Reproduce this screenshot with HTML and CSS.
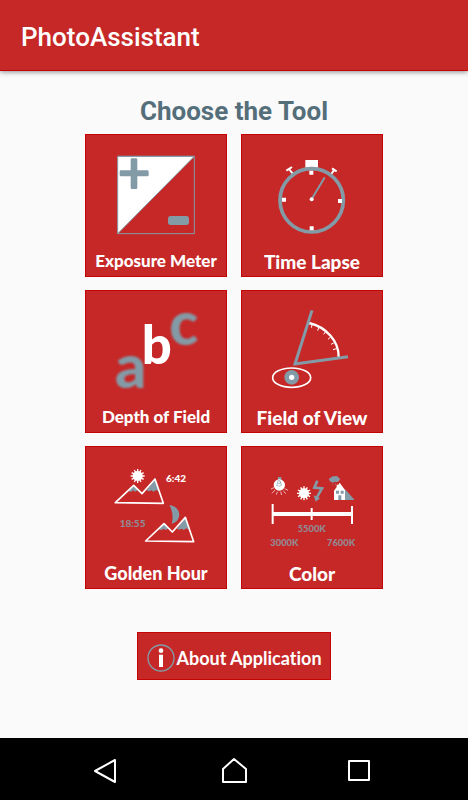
FILE: index.html
```html
<!DOCTYPE html>
<html lang="en">
<head>
<meta charset="utf-8">
<meta name="viewport" content="width=device-width, initial-scale=1">
<title>PhotoAssistant</title>
<link rel="stylesheet" href="styles.css">
</head>
<body>
<header class="app-bar"><h1 class="app-title">PhotoAssistant</h1></header>
<main class="content">
  <h2 class="heading">Choose the Tool</h2>
  <div class="tools">
    <button type="button" class="tile">
      <svg class="art" viewBox="15 12 426 330" aria-hidden="true">
        <path class="white" d="M113 79H343L113 311Z"/>
        <path class="line" stroke-width="3" d="M113 79H343V311H113ZL343 79L113 311"/>
        <path class="slate" d="M156 85h12q4 0 4 4v32h30q4 0 4 4v10q0 4-4 4h-30v34q0 4-4 4h-12q-4 0-4-4v-34h-29q-4 0-4-4v-10q0-4 4-4h29V89q0-4 4-4Z"/>
        <rect class="slate" x="264" y="258" width="63" height="27" rx="8"/>
      </svg>
      <span class="label">Exposure Meter</span>
    </button>
    <button type="button" class="tile">
      <svg class="art" viewBox="15 12 426 330" aria-hidden="true">
        <path class="stroke" stroke-width="6" d="M159 117L170 131M151 122L168 111M295 119L286 132M288 115L302 124"/>
        <circle class="line" cx="227" cy="211" r="95" stroke-width="11"/>
        <path class="white" d="M208 90h38v22q-19-3-38 0ZM220 122h12v12h-12ZM138 203h12v12h-12ZM306 207h12v12h-12ZM221 289h12v12h-12Z"/>
        <path class="line" stroke-width="6" stroke-linecap="round" d="M227 207L265 144"/>
        <circle class="white" cx="227" cy="208" r="6"/>
      </svg>
      <span class="label label-large">Time Lapse</span>
    </button>
    <button type="button" class="tile">
      <svg class="art letters" viewBox="15 12 426 330" aria-hidden="true">
        <text class="slate soft" x="105" y="305" font-size="184">a</text>
        <text class="slate soft" x="268" y="177" font-size="180">c</text>
        <text class="white" x="185" y="233" font-size="158">b</text>
      </svg>
      <span class="label">Depth of Field</span>
    </button>
    <button type="button" class="tile">
      <svg class="art" viewBox="15 12 426 330" aria-hidden="true">
        <path class="stroke" stroke-width="7" d="M219 111C270 123 309 165 308 214"/>
        <path class="stroke" stroke-width="3" d="M229 114L226 125M249 123L245 134M268 138L263 145M283 154L276 160M293 171L285 175M301 188L291 191"/>
        <path class="line" stroke-width="9" d="M228 73L177 234L336 212"/>
        <ellipse class="stroke" cx="167" cy="275" rx="57" ry="29" stroke-width="5"/>
        <circle class="slate" cx="167" cy="274" r="22"/>
        <circle class="white" cx="167" cy="274" r="8"/>
      </svg>
      <span class="label label-large">Field of View</span>
    </button>
    <button type="button" class="tile">
      <svg class="art" viewBox="15 12 426 330" aria-hidden="true">
        <defs>
          <g id="sun">
            <circle class="white" r="15"/>
            <path class="stroke" stroke-width="4" d="M0-21V21M-21 0H21M-18-10L18 10M-10-18L10 18M10-18L-10 18M18-10L-18 10"/>
          </g>
          <g id="mountains">
            <path class="slate" d="M41 147L58 129L75 147L68 145L62 149L55 145L49 150ZM96 145L122 111L132 148L124 144L117 149L110 145L103 148Z"/>
            <path class="stroke" stroke-width="5" stroke-linejoin="round" d="M2 182L57 130L82 155L121 111L146 184Z"/>
          </g>
        </defs>
        <use href="#sun" x="173" y="102"/>
        <use href="#mountains" x="104" y="0"/>
        <use href="#mountains" x="195" y="115"/>
        <path class="slate" d="M268 189Q296 193 298 218Q296 240 275 245Q283 217 268 189Z"/>
        <text class="art-text white" x="258" y="119" font-size="30">6:42</text>
        <text class="art-text muted" x="119" y="254" font-size="30">18:55</text>
      </svg>
      <span class="label label-medium">Golden Hour</span>
    </button>
    <button type="button" class="tile">
      <svg class="art" viewBox="15 12 426 330" aria-hidden="true">
        <path class="slate" d="M126 105h10v10h-10Z"/>
        <circle class="white" cx="130" cy="129" r="17"/>
        <path class="line" stroke-width="2" d="M127 114L122 130Q130 136 137 129L130 114M126 124h7v-6"/>
        <path class="stroke" stroke-width="2" d="M114 137L105 141M117 144L108 154M124 149L121 158M134 149L137 159M142 146L149 155M146 140L156 145"/>
        <use href="#sun" x="204" y="154"/>
        <path class="line" stroke-width="8" d="M244 116L235 137L258 139L242 167"/>
        <path class="slate" d="M233 160L252 169L239 179ZM326 140L356 174H326Z"/>
        <path class="slate" d="M281 116Q275 109 285 107Q286 101 295 103Q304 99 308 107Q315 110 309 116Q305 122 297 119Q287 125 281 116Z"/>
        <path class="line" stroke-width="1" d="M292 121L289 130M299 122L297 132"/>
        <path class="white" d="M294 146L302 135V128H307L311 122L327 144V174H294Z"/>
        <path class="slate" d="M300 146h9v9h-9ZM314 146h9v9h-9ZM307 160h9v14h-9Z"/>
        <path class="stroke" stroke-width="12" d="M110 216H348"/>
        <path class="stroke" stroke-width="6" d="M110 186V246M348 192V246M227 198V234"/>
        <text class="art-text muted" x="185" y="269" font-size="28">5500K</text>
        <text class="art-text muted" x="103" y="312" font-size="28">3000K</text>
        <text class="art-text muted" x="273" y="312" font-size="28">7600K</text>
      </svg>
      <span class="label label-large">Color</span>
    </button>
  </div>
  <button type="button" class="about">
    <svg class="info" viewBox="0 0 84 84" aria-hidden="true">
      <circle class="line" cx="42" cy="42" r="39" stroke-width="4"/>
      <circle class="white" cx="42" cy="20" r="7"/>
      <path class="white" d="M36 32h12v37H36Z"/>
    </svg>
    <span>About Application</span>
  </button>
</main>
<nav class="nav-bar" aria-label="System">
  <button type="button" class="nav-button" aria-label="Back">
    <svg viewBox="0 0 28 28" aria-hidden="true"><path class="stroke" stroke-width="2" stroke-linejoin="round" d="M0 14L20 3V25Z"/></svg>
  </button>
  <button type="button" class="nav-button" aria-label="Home">
    <svg viewBox="0 0 28 28" aria-hidden="true"><path class="stroke" stroke-width="2" stroke-linejoin="round" d="M14 2L26 12V25H3V12Z"/></svg>
  </button>
  <button type="button" class="nav-button" aria-label="Recent apps">
    <svg viewBox="0 0 28 28" aria-hidden="true"><path class="stroke" stroke-width="2" stroke-linejoin="round" d="M4 4H24V23H4Z"/></svg>
  </button>
</nav>
</body>
</html>
```
FILE: styles.css
```css
:root {
  --red: #c62828;
  --red-edge: #c40404;
  --slate: #839ba7;
}

* { box-sizing: border-box; }

body {
  margin: 0;
  min-height: 100vh;
  display: flex;
  flex-direction: column;
  background: #fafafa;
  font-family: Roboto, sans-serif;
}

button {
  padding: 0;
  border: 0;
  color: #fff;
  cursor: pointer;
}

svg { display: block; }

.app-bar {
  display: flex;
  align-items: center;
  min-height: 71px;
  padding: 3px 21px 0;
  background: var(--red);
  border-bottom: 1px solid var(--red-edge);
  box-shadow: 0 1px 5px rgba(0, 0, 0, 0.45);
}

.app-title {
  margin: 0;
  color: #fff;
  font-size: 26px;
  font-weight: 500;
  line-height: 32px;
}

.content {
  flex: 1;
  display: flex;
  flex-direction: column;
  align-items: center;
  padding: 24px 16px;
}

.heading {
  margin: 0 0 7px;
  color: #546e7a;
  font-size: 26px;
  font-weight: 700;
  line-height: 32px;
}

.tools {
  display: grid;
  grid-template-columns: repeat(2, 142px);
  gap: 13px 14px;
}

.tile,
.about {
  background: var(--red);
  box-shadow: inset 0 0 0 1px var(--red-edge);
  font-family: Lato, sans-serif;
  font-weight: 900;
  font-variant-ligatures: none;
}

.tile {
  display: flex;
  flex-direction: column;
  align-items: center;
}

.art {
  width: 142px;
  height: 110px;
  overflow: visible;
}

.label {
  height: 33px;
  font-size: 17px;
  line-height: 34px;
  white-space: nowrap;
}

.label-medium { font-size: 18px; }

.label-large {
  font-size: 19px;
  line-height: 36px;
}

.white { fill: #fff; }
.slate { fill: var(--slate); }
.muted { fill: #928b93; }
.stroke { fill: none; stroke: #fff; }
.line { fill: none; stroke: var(--slate); }
.soft { filter: blur(3px); }

.letters,
.art-text {
  font-family: Lato, sans-serif;
  font-weight: 900;
}

.about {
  display: flex;
  align-items: center;
  gap: 1px;
  height: 48px;
  margin-top: 43px;
  padding: 3px 9px 0 10px;
  font-size: 18px;
  font-weight: 700;
}

.info {
  width: 28px;
  height: 28px;
}

.nav-bar {
  display: flex;
  justify-content: center;
  gap: 77px;
  height: 62px;
  padding-top: 4px;
  background: #000;
}

.nav-button {
  width: 48px;
  display: grid;
  place-items: center;
  background: transparent;
}

.nav-button svg {
  width: 28px;
  height: 28px;
  overflow: visible;
}
```
